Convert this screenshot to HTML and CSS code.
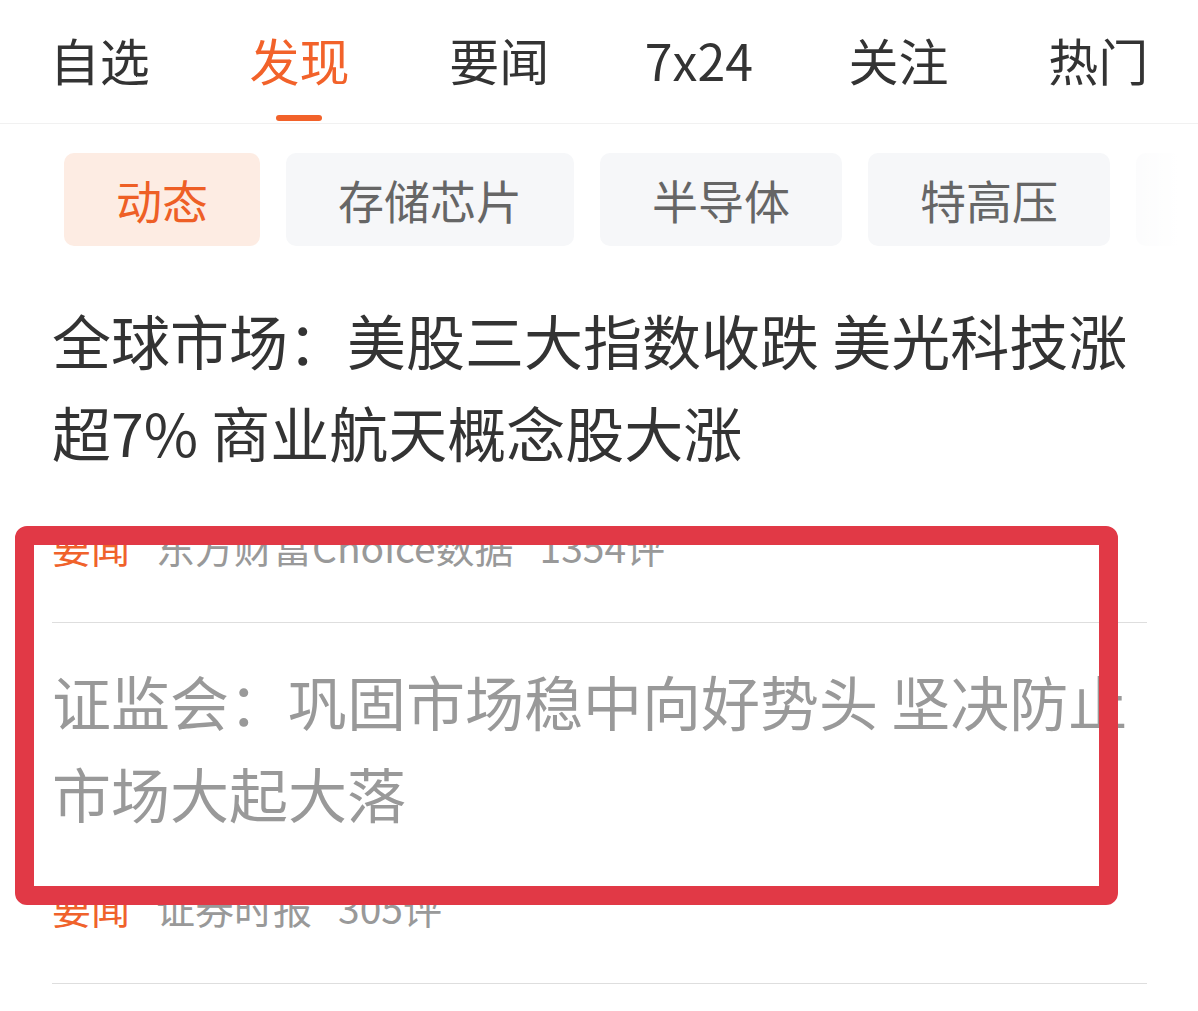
FILE: index.html
```html
<!DOCTYPE html>
<html lang="zh-CN">
<head>
    <meta charset="utf-8" />
    <title>发现</title>
    <link rel="stylesheet" href="styles.css">
</head>
<body>
<nav class="tabs">
    <a class="tab">自选</a>
    <a class="tab active">发现<span class="bar"></span></a>
    <a class="tab">要闻</a>
    <a class="tab">7x24</a>
    <a class="tab">关注</a>
    <a class="tab">热门</a>
</nav>

<div class="chips">
    <span class="chip on">动态</span>
    <span class="chip">存储芯片</span>
    <span class="chip">半导体</span>
    <span class="chip">特高压</span>
    <span class="chip">商业航天</span>
</div>

<ul class="feed">
    <li class="item">
        <h3 class="title">全球市场：美股三大指数收跌 美光科技涨超7% 商业航天概念股大涨</h3>
        <p class="meta"><span class="tag">要闻</span><span>东方财富Choice数据</span><span>1354评</span></p>
    </li>
    <li class="item read">
        <h3 class="title">证监会：巩固市场稳中向好势头 坚决防止市场大起大落</h3>
        <p class="meta"><span class="tag">要闻</span><span>证券时报</span><span>305评</span></p>
    </li>
</ul>

<!-- annotation frame drawn over the feed -->
<div class="mark"></div>
</body>
</html>
```

FILE: styles.css
```css
body{margin:0;background:#fff;font-family:"Noto Sans CJK SC","Noto Sans",sans-serif;color:#333;}

.tabs{display:grid;grid-template-columns:repeat(6,1fr);height:123px;border-bottom:1px solid #f1f1f1;}
.tab{display:flex;flex-direction:column;align-items:center;padding-top:26px;font-size:50px;line-height:66px;color:#333;}
.tab.active{color:#f2622a;}
.tab .bar{display:block;width:46px;height:6px;margin-top:23px;border-radius:3px;background:#f2622a;}

.chips{position:relative;display:flex;gap:26px;margin:29px 0 16px;padding-left:64px;overflow:hidden;white-space:nowrap;}
.chip{flex:none;height:93px;padding:0 52px;border-radius:10px;background:#f6f7f9;color:#666;font-size:46px;line-height:93px;}
.chip.on{background:#fdece3;color:#ee5f26;}
.chips::after{content:"";position:absolute;top:0;right:0;width:66px;height:100%;background:linear-gradient(to right,rgba(255,255,255,0.6),#fff 70%);}

.feed{list-style:none;margin:0;padding:0 51px 0 52px;}
.item{padding:32px 0 51px;border-bottom:1px solid #dedede;}
.title{margin:0;font-size:59px;font-weight:normal;line-height:92px;color:#333;}
.item.read .title{color:#999;}
.meta{display:flex;gap:26px;margin:43px 0 0;font-size:39px;line-height:50px;color:#999;}
.meta .tag{color:#f0622b;}

.mark{position:absolute;left:15px;top:526px;width:1103px;height:379px;box-sizing:border-box;border:19px solid #e13946;border-radius:12px;}
```
